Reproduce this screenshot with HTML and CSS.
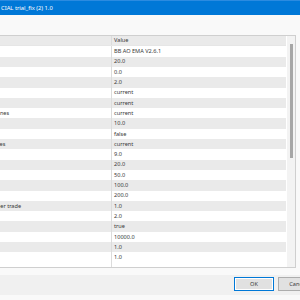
FILE: index.html
```html
<!DOCTYPE html>
<html lang="en">

<head>
    <meta charset="UTF-8">
    <title>Inputs</title>
    <link rel="stylesheet" href="styles.css">
</head>

<body>
    <div class="titlebar"><span class="titlebar__text">CIAL trial_fix (2) 1.0</span></div>
    <div class="dialog">
        <div class="listbox">
            <div class="grid">
                <div class="row row--head">
                    <span class="cell cell--name">Variable</span>
                    <span class="cell cell--value">Value</span>
                </div>
                <div class="row"><span class="cell cell--name">Expert name</span><span class="cell cell--value">BB AO EMA V2.6.1</span></div>
                <div class="row"><span class="cell cell--name">BB period</span><span class="cell cell--value">20.0</span></div>
                <div class="row"><span class="cell cell--name">BB shift</span><span class="cell cell--value">0.0</span></div>
                <div class="row"><span class="cell cell--name">BB deviation</span><span class="cell cell--value">2.0</span></div>
                <div class="row"><span class="cell cell--name">BB timeframe</span><span class="cell cell--value">current</span></div>
                <div class="row"><span class="cell cell--name">AO timeframe</span><span class="cell cell--value">current</span></div>
                <div class="row"><span class="cell cell--name">Timeframes for EMA lines</span><span class="cell cell--value">current</span></div>
                <div class="row"><span class="cell cell--name">EMA period</span><span class="cell cell--value">10.0</span></div>
                <div class="row"><span class="cell cell--name">Use filter</span><span class="cell cell--value">false</span></div>
                <div class="row"><span class="cell cell--name">Filters trend timeframes</span><span class="cell cell--value">current</span></div>
                <div class="row"><span class="cell cell--name">Fast MA</span><span class="cell cell--value">9.0</span></div>
                <div class="row"><span class="cell cell--name">Medium MA</span><span class="cell cell--value">20.0</span></div>
                <div class="row"><span class="cell cell--name">Slow MA</span><span class="cell cell--value">50.0</span></div>
                <div class="row"><span class="cell cell--name">Take profit</span><span class="cell cell--value">100.0</span></div>
                <div class="row"><span class="cell cell--name">Stop loss</span><span class="cell cell--value">200.0</span></div>
                <div class="row"><span class="cell cell--name">Max risk percentage per trade</span><span class="cell cell--value">1.0</span></div>
                <div class="row"><span class="cell cell--name">Max spread</span><span class="cell cell--value">2.0</span></div>
                <div class="row"><span class="cell cell--name">Use MM</span><span class="cell cell--value">true</span></div>
                <div class="row"><span class="cell cell--name">Max balance</span><span class="cell cell--value">10000.0</span></div>
                <div class="row"><span class="cell cell--name">Lots</span><span class="cell cell--value">1.0</span></div>
                <div class="row"><span class="cell cell--name">Min lots</span><span class="cell cell--value">1.0</span></div>
                <div class="row row--rest"><span class="cell cell--name"></span><span class="cell cell--value"></span></div>
            </div>
            <div class="scrollbar">
                <span class="scrollbar__thumb"></span>
            </div>
        </div>
        <div class="footer">
            <button class="btn btn--default" type="button">OK</button>
            <button class="btn" type="button">Cancel</button>
        </div>
    </div>
</body>

</html>
```

FILE: styles.css
```css
* {
    box-sizing: border-box;
    margin: 0;
    padding: 0;
}

:root {
    --blue: #0078d7;
    --line: #dcdcdc;
    --stripe: #eaeaea;
    --fg: #383838;
    --row-h: 10.3px;
}

body {
    background: #f9f9f9;
    color: var(--fg);
    font: 5.6px/1.2 "Noto Sans", "Open Sans", sans-serif;
    overflow: hidden;
    width: 300px;
    height: 300px;
}

.titlebar {
    background: var(--blue);
    border-top: 1px solid #2b8be0;
    color: #fff;
    display: flex;
    align-items: center;
    height: 15px;
    padding-left: 1px;
}

.titlebar__text {
    font-size: 5.8px;
    white-space: nowrap;
}

/* dialog is wider than the frame; its left part is off-screen */
.dialog {
    margin-left: -60px;
    width: 364px;
    padding-top: 20px;
}

.listbox {
    background: #fff;
    border: 1px solid #cfcfcf;
    border-left: 0;
    display: flex;
    width: 356px;
    height: 233px;
}

.grid {
    display: flex;
    flex-direction: column;
    flex: 1;
    overflow: hidden;
}

.row {
    display: flex;
    flex-shrink: 0;
    height: var(--row-h);
    align-items: center;
}

.row:nth-child(odd) {
    background: var(--stripe);
}

.row--head,
.row--head + .row {
    background: #fff;
}

.row--head {
    height: 10.4px;
    border-bottom: 1px solid #e6e6e6;
}

.row--rest {
    background: #fff !important;
    flex: 1;
}

.cell {
    align-self: stretch;
    display: flex;
    align-items: center;
    white-space: nowrap;
}

.cell--name {
    width: 172px;
    padding-left: 2px;
    border-right: 1px solid var(--line);
}

.cell--value {
    padding-left: 2px;
}

.scrollbar {
    background: #f3f3f3;
    border-left: 1px solid #fff;
    width: 9px;
    padding: 8px 3px 0;
}

.scrollbar__thumb {
    background: #a6a6a6;
    display: block;
    width: 3px;
    height: 114px;
}

.footer {
    background: #f0f0f0;
    display: flex;
    gap: 4px;
    margin-top: 7px;
    padding: 2px 0 4px 294px;
}

.btn {
    background: #e1e1e1;
    border: 1px solid #adadad;
    color: var(--fg);
    font: inherit;
    width: 40px;
    height: 14px;
    flex-shrink: 0;
}

.btn--default {
    border-color: var(--blue);
    box-shadow: inset 0 0 0 1px #fff;
}
```
